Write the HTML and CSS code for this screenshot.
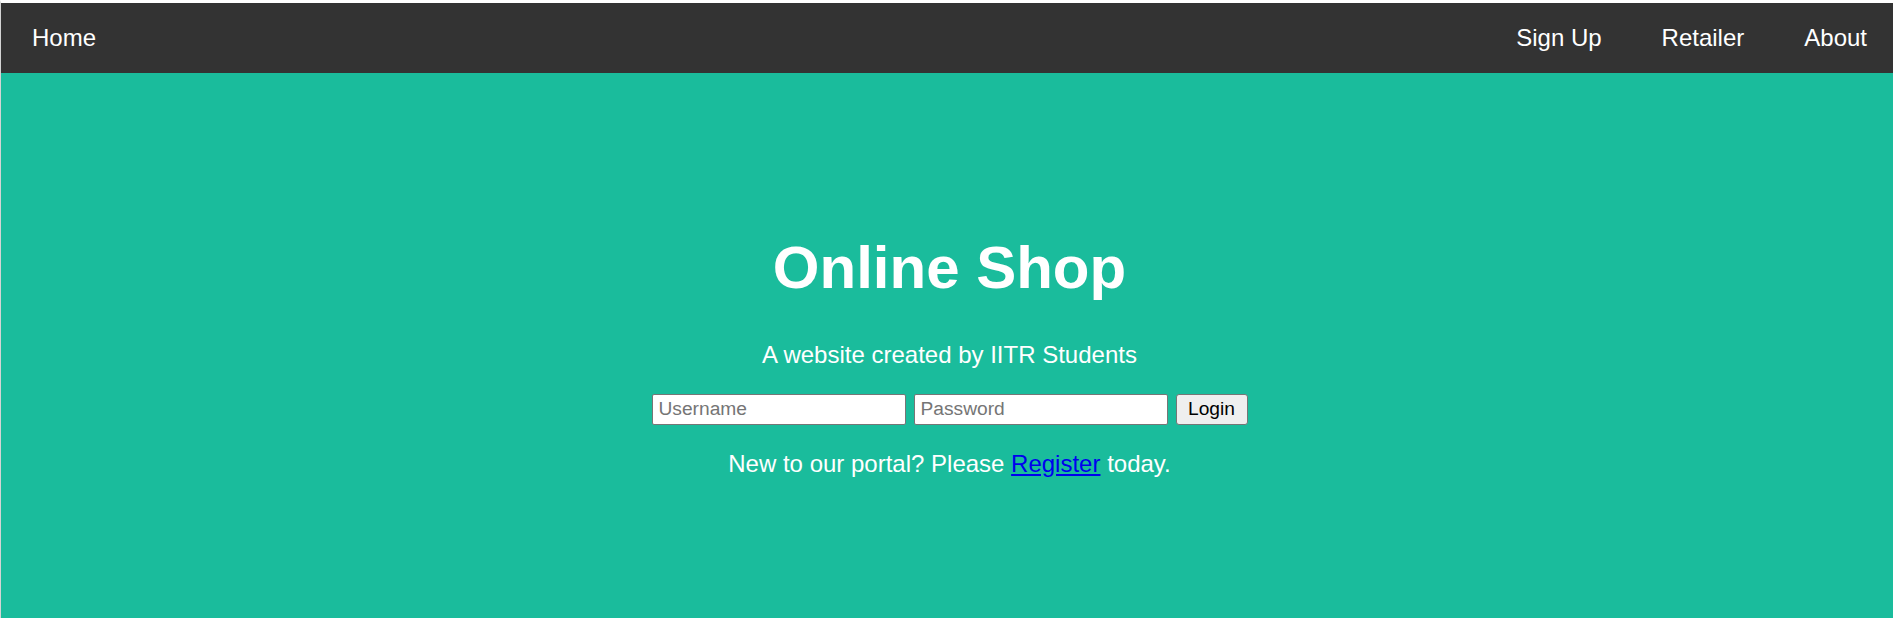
FILE: index.html
```html
<!DOCTYPE html>
<html lang="en">
<head>
<meta charset="utf-8">
<title>Online Shop</title>
<link rel="stylesheet" href="styles.css">
</head>
<body>
<div class="page">
  <nav class="topnav">
    <a class="nav-link" href="#">Home</a>
    <div class="nav-right">
      <a class="nav-link" href="#">Sign Up</a>
      <a class="nav-link" href="#">Retailer</a>
      <a class="nav-link" href="#">About</a>
    </div>
  </nav>
  <main class="hero">
    <h1 class="title">Online Shop</h1>
    <p class="subtitle">A website created by IITR Students</p>
    <form class="login-form">
      <input class="field" type="text" placeholder="Username">
      <input class="field" type="password" placeholder="Password">
      <button class="login-btn" type="button">Login</button>
    </form>
    <p class="register">New to our portal? Please <a class="register-link" href="#">Register</a> today.</p>
  </main>
</div>
</body>
</html>
```
FILE: styles.css
```css
html, body {
  margin: 0;
  padding: 0;
  height: 100%;
  background: #ffffff;
}

.page {
  display: flex;
  flex-direction: column;
  height: 100%;
  box-sizing: border-box;
  border-top: 3px solid #ffffff;
  border-left: 1px solid #d4d4d4;
  font-family: "Liberation Sans", Arial, sans-serif;
}

.topnav {
  display: flex;
  justify-content: space-between;
  align-items: center;
  height: 70px;
  background: #333333;
  padding: 0 26px 0 31px;
  flex-shrink: 0;
}

.nav-right {
  display: flex;
  gap: 60px;
}

.nav-link {
  color: #ffffff;
  text-decoration: none;
  font-size: 24px;
  line-height: 70px;
}

.hero {
  flex: 1;
  background: #1abc9c;
  display: flex;
  flex-direction: column;
  align-items: center;
  padding: 160px 0 0 5px;
  color: #ffffff;
}

.title {
  margin: 0;
  font-size: 60px;
  font-weight: bold;
  line-height: 69px;
}

.subtitle {
  margin: 39px 0 0;
  font-size: 24px;
  line-height: 27.6px;
}

.login-form {
  display: flex;
  gap: 8px;
  margin-top: 25px;
}

.field {
  box-sizing: border-box;
  width: 254px;
  height: 31px;
  padding: 0 6px;
  border: 1px solid #767676;
  border-radius: 2px;
  background: #ffffff;
  font-family: "Liberation Sans", Arial, sans-serif;
  font-size: 19.2px;
  color: #000000;
}

.field::placeholder {
  color: #757575;
}

.login-btn {
  box-sizing: border-box;
  width: 72px;
  height: 31px;
  padding: 0;
  border: 1px solid #767676;
  border-radius: 3px;
  background: #efefef;
  font-family: "Liberation Sans", Arial, sans-serif;
  font-size: 19.2px;
  color: #000000;
}

.register {
  margin: 25px 0 0;
  font-size: 24px;
  line-height: 27.6px;
}

.register-link {
  color: #0000ee;
  text-decoration: underline;
}
```
